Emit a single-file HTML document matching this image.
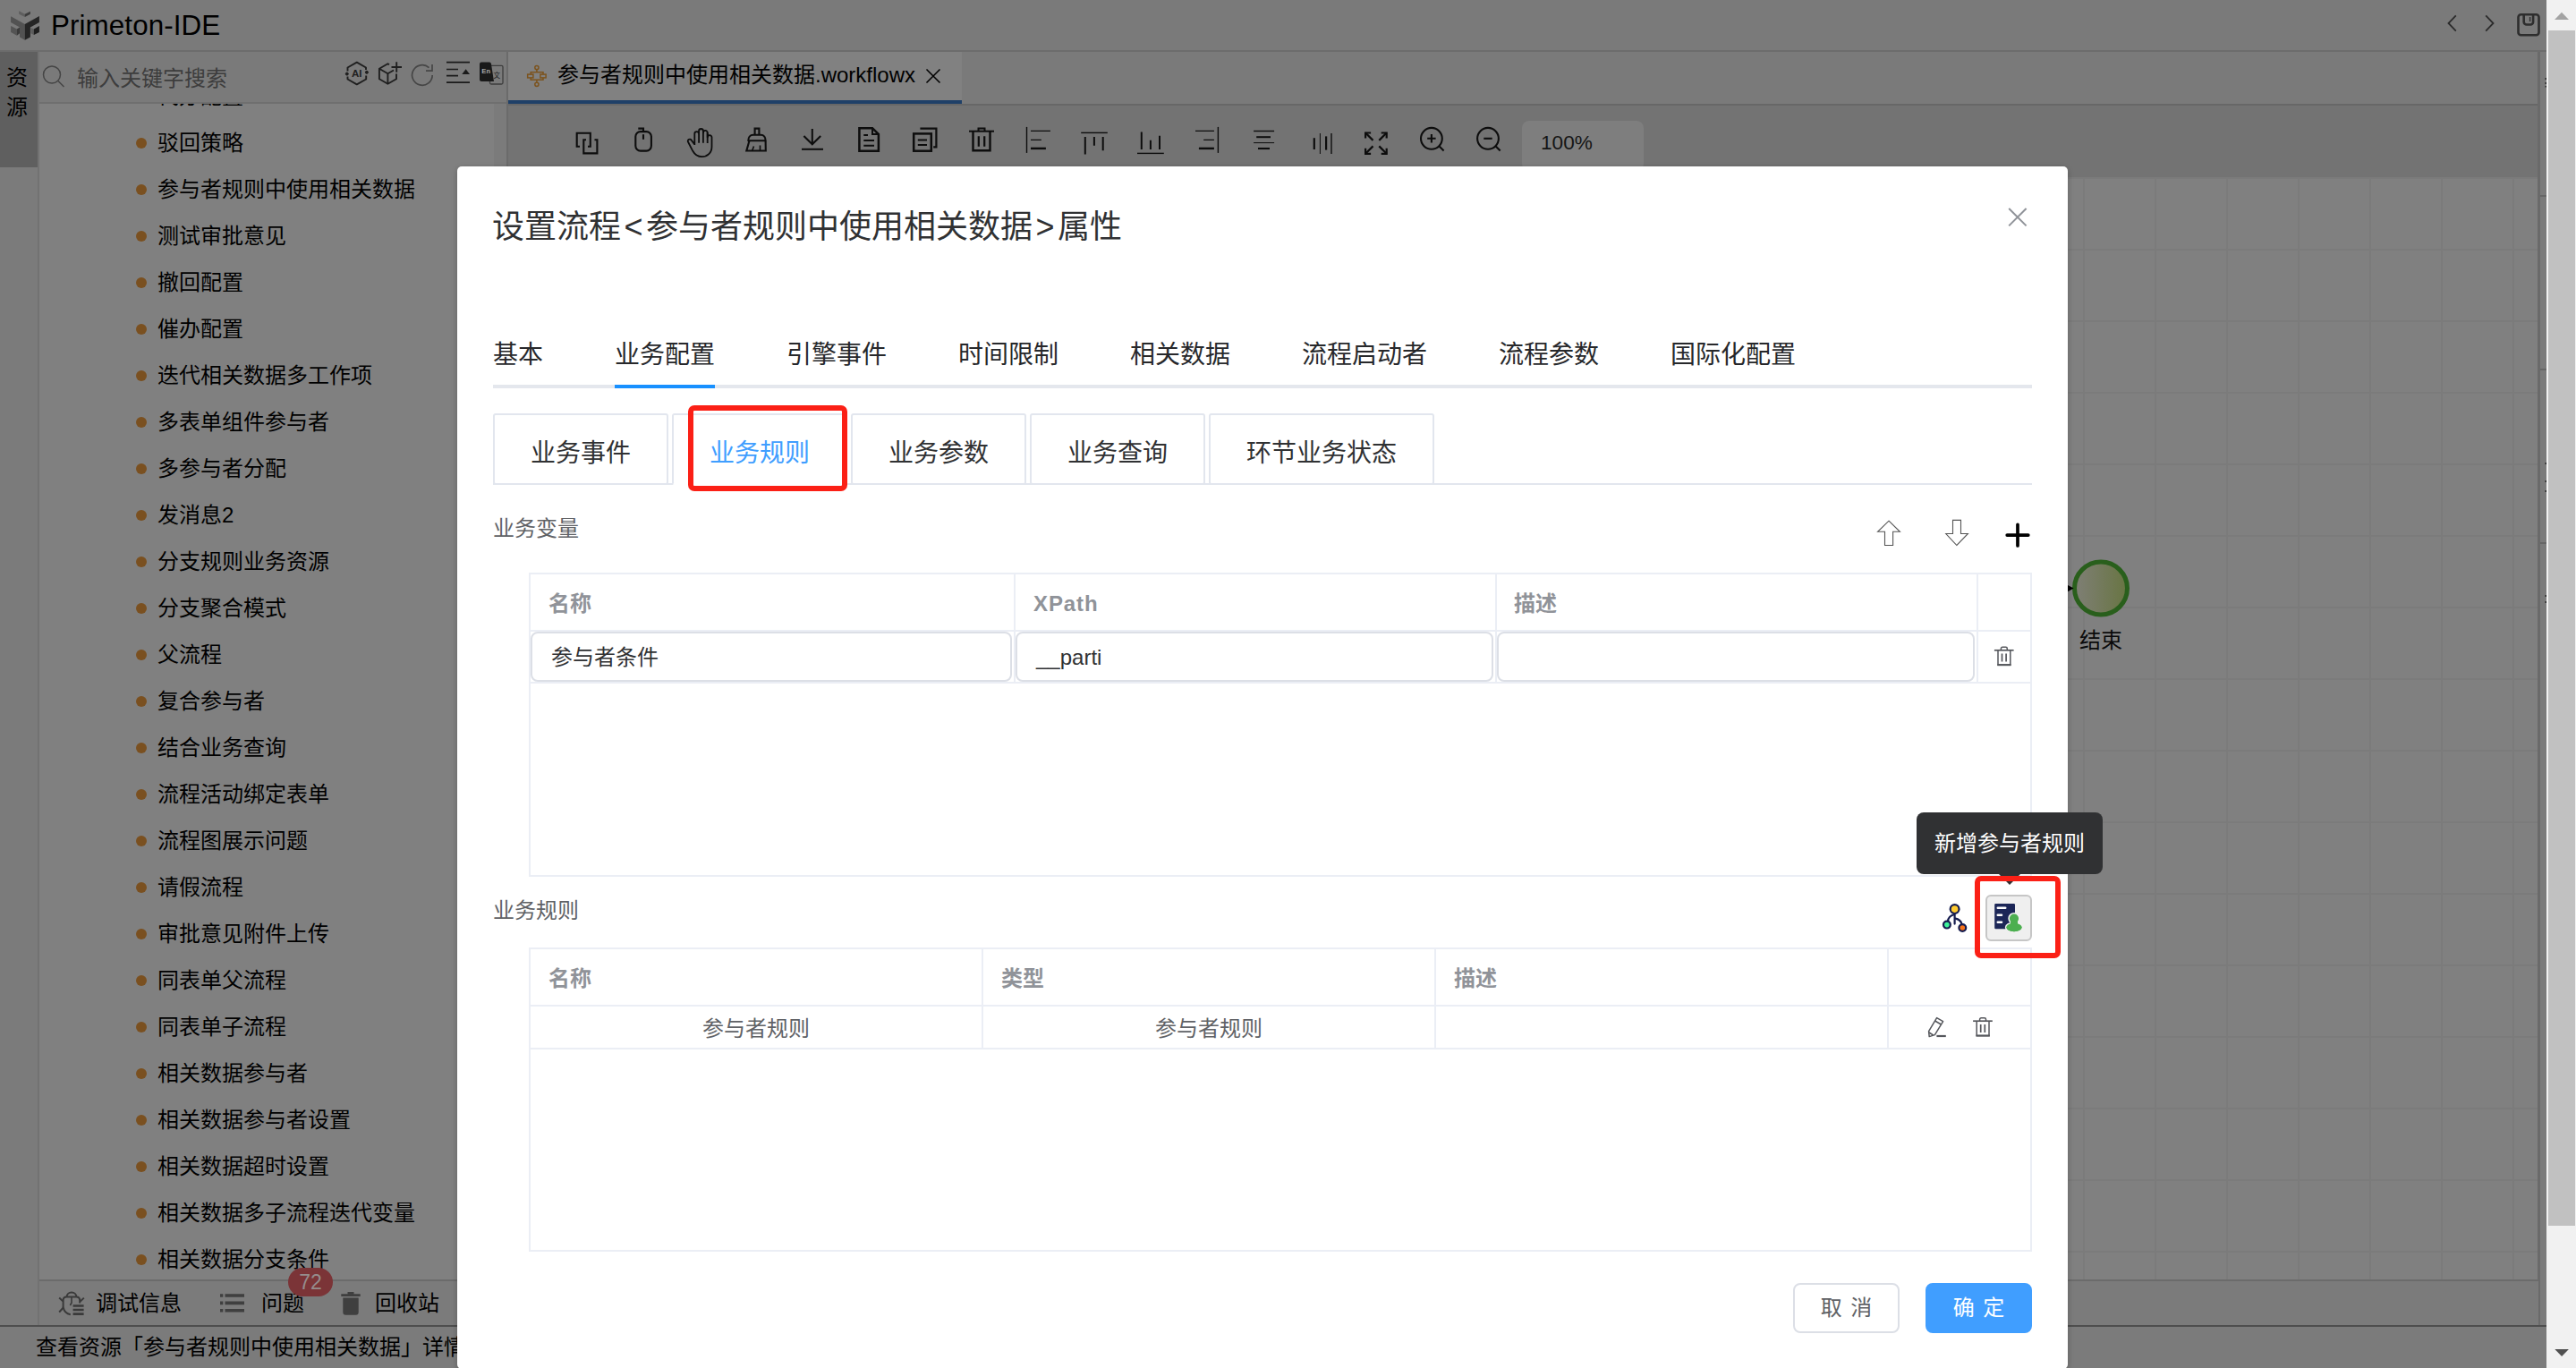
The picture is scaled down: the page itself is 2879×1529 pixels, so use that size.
<!DOCTYPE html>
<html lang="zh-CN">
<head>
<meta charset="utf-8">
<title>Primeton-IDE</title>
<style>
*{box-sizing:border-box;margin:0;padding:0}
html,body{width:2879px;height:1529px;overflow:hidden;background:#808080}
body{position:relative;font-family:"Liberation Sans","Noto Sans CJK SC",sans-serif;color:#000;font-size:24px}
.abs{position:absolute}
svg{position:absolute;overflow:visible}
/* ---------- background IDE (dimmed) ---------- */
#hdr{left:0;top:0;width:2846px;height:56px;background:#7a7a7a}
#hdrline{left:0;top:56px;width:2846px;height:2px;background:#6c6c6c}
#title{left:57px;top:9px;font-size:31.35px;line-height:40px;color:#000;letter-spacing:0.1px}
#strip{left:0;top:58px;width:42px;height:129px;background:#5f5f5f}
#stripbelow{left:0;top:187px;width:42px;height:1295px;background:#7b7b7b}
#stripline{left:42px;top:58px;width:2px;height:1424px;background:#727272}
#striptxt{left:5px;top:70px;width:28px;font-size:24px;line-height:33px;color:#000;text-align:center}
#search{left:44px;top:58px;width:522px;height:56px;background:#7a7a7a}
#searchline{left:44px;top:114px;width:522px;height:2px;background:#6f6f6f}
#ph{left:86px;top:68px;font-size:24px;line-height:40px;color:#3d3d3d}
#tree{left:44px;top:116px;width:508px;height:1314px;background:#808080;overflow:hidden}
#treesb{left:552px;top:116px;width:14px;height:1314px;background:#7b7b7b}
.ti{position:absolute;left:0;height:52px;width:508px;line-height:52px;font-size:24px;color:#000;padding-left:132px;white-space:nowrap}
.ti i{position:absolute;left:108px;top:20px;width:12px;height:12px;border-radius:50%;background:#7a5020}
#vdiv{left:566px;top:58px;width:2px;height:1372px;background:#6b6b6b}
#tabbar{left:568px;top:58px;width:2269px;height:58px;background:#7a7a7a}
#tabact{left:568px;top:58px;width:507px;height:54px;background:#818181}
#tabul{left:568px;top:112px;width:507px;height:4px;background:#1f4068}
#tabline{left:568px;top:116px;width:2269px;height:2px;background:#676767}
#tabtxt{left:623px;top:64px;font-size:24px;line-height:40px;color:#000;white-space:nowrap}
#toolbar{left:568px;top:118px;width:2269px;height:80px;background:#737373}
#zoombox{left:1701px;top:135px;width:136px;height:56px;border-radius:8px;background:#7e7e7e}
#zoomtxt{left:1722px;top:140px;font-size:22.6px;line-height:40px;color:#151515}
#canvas{left:568px;top:198px;width:2269px;height:1232px;background-color:#808080;
 background-image:linear-gradient(to right,#7b7b7b 0,#7b7b7b 2px,transparent 2px),linear-gradient(to bottom,#7b7b7b 0,#7b7b7b 2px,transparent 2px);
 background-size:80px 80px;background-position:-80px 0px}
#rline{left:2836px;top:58px;width:3px;height:1424px;background:#6a6a6a}
#rstrip{left:2839px;top:58px;width:7px;height:1424px;background:#7b7b7b}
#botline1{left:44px;top:1430px;width:2793px;height:2px;background:#6b6b6b}
#botpanel{left:44px;top:1432px;width:2793px;height:49px;background:#7b7b7b}
#botline2{left:0;top:1481px;width:2846px;height:2px;background:#4e4e4e}
#status{left:0;top:1483px;width:2846px;height:46px;background:#7b7b7b}
#statustxt{left:40px;top:1486px;font-size:24px;line-height:40px;color:#000;white-space:nowrap}
.bt{position:absolute;top:1437px;font-size:24px;line-height:40px;color:#000;white-space:nowrap}
#badge{left:322px;top:1417px;width:50px;height:32px;border-radius:16px;background:#7b3437;color:#958c8c;font-size:23px;line-height:32px;text-align:center}
/* page scrollbar */
#sb{left:2846px;top:0;width:33px;height:1529px;background:#f1f1f1}
#sbthumb{left:2848px;top:34px;width:30px;height:1336px;background:#c1c1c1}
/* ---------- dialog ---------- */
#dlg{left:511px;top:186px;width:1800px;height:1344px;background:#fff;border-radius:5px;box-shadow:0 2px 6px rgba(0,0,0,.25)}
#dlgtitle{left:550px;top:228px;font-size:36px;line-height:52px;color:#303133;white-space:nowrap}
#dlgtitle b{font-weight:normal;display:inline-block;width:28px;text-align:center}
.tab{position:absolute;top:375px;font-size:28px;line-height:44px;color:#27282b;white-space:nowrap}
#tabsline{left:551px;top:430px;width:1720px;height:4px;background:#e4e7ed}
#tabsact{left:687px;top:430px;width:112px;height:4px;background:#1890ff}
.card{position:absolute;top:462px;height:80px;border:2px solid #e2e6ee;border-radius:3px;font-size:28px;line-height:86px;color:#303133;text-align:center;white-space:nowrap;background:#fff}
#cardline{left:551px;top:540px;width:1720px;height:2px;background:#e2e6ee}
.lbl{position:absolute;left:551px;margin-top:1px;font-size:24px;line-height:40px;color:#606266;white-space:nowrap}
.tbl{position:absolute;border:2px solid #ebeef5;background:#fff}
.hl{position:absolute;background:#ebeef5}
.th{position:absolute;margin-top:1px;font-size:24px;line-height:40px;font-weight:bold;color:#909399;white-space:nowrap}
.td{position:absolute;margin-top:2px;font-size:24px;line-height:40px;color:#606266;white-space:nowrap;text-align:center}
.inp{position:absolute;top:706px;height:56px;border:2px solid #dcdfe6;border-radius:8px;background:#fff;font-size:24px;line-height:53px;color:#303133;padding-left:21px;white-space:nowrap}
.red{position:absolute;border:6px solid #fb2016;border-radius:7px}
#tip{left:2142px;top:908px;width:208px;height:69px;border-radius:8px;background:#303133;color:#fff;font-size:24px;line-height:69px;text-align:center;white-space:nowrap}
#tiparrow{left:2234px;top:977px;width:0;height:0;border-left:12px solid transparent;border-right:12px solid transparent;border-top:12px solid #303133}
#btn2{left:2219px;top:1000px;width:52px;height:52px;border:2px solid #c6c6c6;border-radius:6px;background:#efefef}
.btn{position:absolute;top:1434px;width:119px;height:56px;border-radius:8px;font-size:24px;line-height:52px;text-align:center;white-space:nowrap;word-spacing:3px}
#cancel{left:2004px;border:2px solid #dcdfe6;background:#fff;color:#606266}
#okbtn{left:2152px;border:2px solid #409eff;background:#409eff;color:#fff}
</style>
</head>
<body>
<!-- ===== dimmed IDE ===== -->
<div id="hdr" class="abs"></div>
<div id="hdrline" class="abs"></div>
<div id="title" class="abs">Primeton-IDE</div>
<div id="strip" class="abs"></div>
<div id="stripbelow" class="abs"></div>
<div id="stripline" class="abs"></div>
<div id="striptxt" class="abs">资<br>源</div>
<div id="search" class="abs"></div>
<div id="searchline" class="abs"></div>
<div id="ph" class="abs">输入关键字搜索</div>
<div id="tree" class="abs">
<div class="ti" style="top:-34px"><i></i>代办配置</div>
<div class="ti" style="top:18px"><i></i>驳回策略</div>
<div class="ti" style="top:70px"><i></i>参与者规则中使用相关数据</div>
<div class="ti" style="top:122px"><i></i>测试审批意见</div>
<div class="ti" style="top:174px"><i></i>撤回配置</div>
<div class="ti" style="top:226px"><i></i>催办配置</div>
<div class="ti" style="top:278px"><i></i>迭代相关数据多工作项</div>
<div class="ti" style="top:330px"><i></i>多表单组件参与者</div>
<div class="ti" style="top:382px"><i></i>多参与者分配</div>
<div class="ti" style="top:434px"><i></i>发消息2</div>
<div class="ti" style="top:486px"><i></i>分支规则业务资源</div>
<div class="ti" style="top:538px"><i></i>分支聚合模式</div>
<div class="ti" style="top:590px"><i></i>父流程</div>
<div class="ti" style="top:642px"><i></i>复合参与者</div>
<div class="ti" style="top:694px"><i></i>结合业务查询</div>
<div class="ti" style="top:746px"><i></i>流程活动绑定表单</div>
<div class="ti" style="top:798px"><i></i>流程图展示问题</div>
<div class="ti" style="top:850px"><i></i>请假流程</div>
<div class="ti" style="top:902px"><i></i>审批意见附件上传</div>
<div class="ti" style="top:954px"><i></i>同表单父流程</div>
<div class="ti" style="top:1006px"><i></i>同表单子流程</div>
<div class="ti" style="top:1058px"><i></i>相关数据参与者</div>
<div class="ti" style="top:1110px"><i></i>相关数据参与者设置</div>
<div class="ti" style="top:1162px"><i></i>相关数据超时设置</div>
<div class="ti" style="top:1214px"><i></i>相关数据多子流程迭代变量</div>
<div class="ti" style="top:1266px"><i></i>相关数据分支条件</div>
</div>
<div id="treesb" class="abs"></div>
<div id="vdiv" class="abs"></div>
<div id="tabbar" class="abs"></div>
<div id="tabact" class="abs"></div>
<div id="tabul" class="abs"></div>
<div id="tabline" class="abs"></div>
<div id="tabtxt" class="abs">参与者规则中使用相关数据.workflowx</div>
<div id="toolbar" class="abs"></div>
<div id="zoombox" class="abs"></div>
<div id="zoomtxt" class="abs">100%</div>
<div id="canvas" class="abs"></div>
<div id="rline" class="abs"></div>
<div id="rstrip" class="abs"></div>
<div id="botline1" class="abs"></div>
<div id="botpanel" class="abs"></div>
<div id="botline2" class="abs"></div>
<div id="status" class="abs"></div>
<div id="statustxt" class="abs">查看资源「参与者规则中使用相关数据」详情</div>
<div class="bt" style="left:107px">调试信息</div>
<div class="bt" style="left:292px">问题</div>
<div class="bt" style="left:419px">回收站</div>
<div id="badge" class="abs">72</div>
<!--BGICONS_START-->
<svg id="bgicons" style="left:0;top:0" width="2879" height="1529" viewBox="0 0 2879 1529" fill="none" stroke-linecap="butt" stroke-linejoin="miter">
<!-- logo -->
<g stroke="none">
<polygon points="21.2,12.3 27.8,15.7 27.8,19.1 21.2,15.7" fill="#5e5e5e"/>
<polygon points="27.8,15.7 33.9,12.7 33.9,15.7 27.8,19.1" fill="#3c3c3c"/>
<polygon points="12.1,18.2 27.8,26.9 27.8,44.7 22,41.5 22,30.5 12.1,25" fill="#525252"/>
<polygon points="27.8,26.9 43.9,18 43.9,25 33.9,30.5 33.9,41.5 27.8,44.7" fill="#252525"/>
<polygon points="12.1,29 18.9,32.6 18.9,39.8 12.1,36" fill="#545454"/>
<polygon points="18.9,32.6 22,30.5 22,37.3 18.9,39.8" fill="#3a3a3a"/>
<polygon points="34.5,30.9 37.9,32.6 37.9,39 34.5,37.3" fill="#5c5c5c"/>
<polygon points="37.9,32.6 43.9,29 43.9,36 37.9,39" fill="#1e1e1e"/>
</g>
<!-- header right icons -->
<g stroke="#2c2c2c" stroke-width="1.8">
<polyline points="2744.8,17.4 2736.5,26 2744.8,34.6"/>
<polyline points="2778.2,17.4 2786.5,26 2778.2,34.6"/>
</g>
<g stroke="#2e2e2e" stroke-width="2.6">
<rect x="2814.5" y="16.3" width="23" height="23" rx="3"/>
<path d="M2820.7,16.3 V24.5 a3,3 0 0 0 3,3 h4.4 a3,3 0 0 0 3,-3 V16.3"/>
<path d="M2827.6,19 V24" stroke-width="1.4"/>
</g>
<!-- search icon -->
<g stroke="#454545" stroke-width="1.5">
<circle cx="58" cy="83.5" r="9.5"/>
<path d="M65,90.5 L71.5,97"/>
</g>
<!-- AI hexagon -->
<g stroke="#1f1f1f" stroke-width="1.9" stroke-linejoin="round">
<path d="M388.5,79.5 V75.5 L398.8,69.6 L409,75.5 V78"/>
<path d="M409.2,84.5 V88.5 L398.8,94.4 L388.5,88.5 V85.5"/>
<circle cx="387.8" cy="82.6" r="1.5" fill="#1f1f1f" stroke-width="1"/>
<circle cx="409.9" cy="80.8" r="1.5" fill="#1f1f1f" stroke-width="1"/>
</g>
<text x="398.7" y="86.3" font-family="Liberation Sans, sans-serif" font-weight="bold" font-size="11.5" fill="#1f1f1f" stroke="none" text-anchor="middle">AI</text>
<!-- cube plus -->
<g stroke="#1f1f1f" stroke-width="1.9" stroke-linejoin="round">
<path d="M435,72.2 L433.4,71.3 L423.9,76.8 V88.3 L433.4,93.8 L443,88.3 V82.5"/>
<path d="M423.9,76.8 L433.4,82.3 L440,78.5"/>
<path d="M433.4,82.3 V93.8"/>
<path d="M437.5,75 H449 M443.2,69.3 V80.7"/>
</g>
<!-- refresh -->
<g stroke="#464646" stroke-width="1.7">
<path d="M483.2,84 A11.3,11.3 0 1 1 479.5,75.6"/>
<polyline points="483,72 483,79.2 476,79.2"/>
</g>
<!-- collapse -->
<g stroke="#1a1a1a" stroke-width="1.7">
<path d="M499,69.6 H525 M499,77.5 H512 M499,84.6 H512 M499,92.2 H525"/>
<polygon points="516.3,83 520.6,77.3 525,83" fill="#1a1a1a" stroke="none"/>
</g>
<!-- translate -->
<g>
<rect x="547.5" y="73.3" width="14.5" height="20.7" rx="1.5" stroke="#3d3d3d" stroke-width="1.3"/>
<path d="M538,69.4 h9 a2,2 0 0 1 1.9,1.5 L552,91 h-14 a2,2 0 0 1 -2,-2 v-17.6 a2,2 0 0 1 2,-2z" fill="#191919" stroke="none"/>
<text x="543.2" y="82.4" font-family="Liberation Sans, sans-serif" font-weight="bold" font-size="7.6" fill="#a8a8a8" stroke="none" text-anchor="middle">En</text>
<text x="555.3" y="86.6" font-family="'Noto Sans CJK SC', sans-serif" font-size="7.6" fill="#1c1c1c" stroke="none" text-anchor="middle">文</text>
</g>
<!-- tab icon workflow -->
<g stroke="#7c531d" stroke-width="1.5">
<circle cx="599.9" cy="75.6" r="2.1"/>
<circle cx="599.9" cy="94.3" r="2.1"/>
<path d="M599.9,77.8 V80.7 M599.9,89.2 V92.1"/>
<rect x="593.2" y="80.7" width="13.8" height="8.5"/>
<rect x="589.7" y="83.1" width="6.2" height="3.8" fill="#818181"/>
<rect x="603.9" y="83.1" width="6.2" height="3.8" fill="#818181"/>
</g>
<!-- tab close -->
<path d="M1035.5,77.5 L1050.5,92.5 M1050.5,77.5 L1035.5,92.5" stroke="#000" stroke-width="1.5"/>
<!-- toolbar icons -->
<g stroke="#0d0d0d" stroke-width="2.1">
<!-- 1 overlapping squares -->
<path d="M648,163.8 H644.7 V148.7 H659.8 V163.8 H657"/>
<path d="M655,156.3 H652.3 V171.4 H667.4 V156.3 H664.5"/>
<!-- 2 mouse -->
<rect x="710.3" y="147.1" width="17.6" height="21.5" rx="5.5"/>
<path d="M719,147 V143.6 H713.3"/>
<path d="M719,150.2 V155.8"/>
<!-- 3 hand -->
<path d="M776.3,162 V149.6 a2.4,2.4 0 0 1 4.8,0 V146.4 a2.4,2.4 0 0 1 4.8,0 V148.3 a2.4,2.4 0 0 1 4.8,0 V153.5 a2.4,2.4 0 0 1 4.8,0 V164 C795.5,171 790.5,175.2 784.5,175.2 C779.5,175.2 776.5,172.8 774.3,168.8 L769.2,159 a2.1,2.1 0 0 1 3.3,-2.6 L776.3,161.5" stroke-width="1.8" stroke-linejoin="round"/>
<path d="M781.1,149.6 V159.8 M785.9,146.4 V159.8 M790.7,148.3 V160" stroke-width="1.8"/>
<!-- 4 broom -->
<path d="M843.6,150.7 V143.6 H848.4 V150.7"/>
<path d="M836.3,157.3 c0,-3.6 2,-6.6 5.5,-6.6 h8.5 c3.5,0 5.3,3 5.3,6.6 Z" stroke-linejoin="round"/>
<path d="M837.5,157.3 L834.3,168.5 H855.8 L855.6,157.3"/>
<path d="M842.5,163.5 L840.8,168 M849.5,162.5 V168" stroke-width="1.6"/>
<!-- 5 download -->
<path d="M907.8,144 V161"/>
<polyline points="898.4,151.9 907.8,161.3 917.2,151.9"/>
<path d="M896,166.8 H920" stroke-width="2"/>
<!-- 6 document -->
<path d="M960.4,143.2 H975 L981.9,150 V168.7 H960.4 Z" stroke-width="2.5"/>
<path d="M975,143.2 V150 H981.9" stroke-width="2"/>
<path d="M965.3,151 H970 M965.3,157 H977 M965.3,162.8 H977" stroke-width="2"/>
<!-- 7 copy docs -->
<rect x="1021.2" y="149.4" width="19.6" height="19.3" stroke-width="2.5"/>
<path d="M1028.4,143.7 H1046.4 V164.3 H1043.2" stroke-width="2.2"/>
<path d="M1025.8,156.4 H1036 M1025.8,162.1 H1036" stroke-width="2"/>
<!-- 8 trash -->
<path d="M1083,146.7 H1111" stroke-width="2"/>
<path d="M1093.5,146.7 V143.6 H1100.5 V146.7" stroke-width="2"/>
<path d="M1087.5,146.7 V168.3 H1106.5 V146.7" stroke-width="2.4"/>
<path d="M1093.8,152.2 V163.8 M1100.2,152.2 V163.8" stroke-width="2.2"/>
<!-- 9 align-left -->
<path d="M1147.5,141.9 V170.9" stroke-width="1.4"/>
<path d="M1152,146.4 H1173.9 M1152,156.4 H1163.8" stroke-width="1.3"/>
<path d="M1152,165.9 H1168.9" stroke-width="2.4"/>
<!-- 10 align-top -->
<path d="M1208.2,148.4 H1237.8" stroke-width="1.4"/>
<path d="M1212.8,153 V172.4 M1222.9,153 V162.8 M1232.7,153 V168.2" stroke-width="2"/>
<!-- 11 align-bottom -->
<path d="M1271,171.4 H1300.8" stroke-width="1.4"/>
<path d="M1275.8,147.4 V167.1 M1285.9,156.7 V167.1 M1296,151.7 V167.1" stroke-width="2"/>
<!-- 12 align-right -->
<path d="M1361.4,141.9 V170.9" stroke-width="1.4"/>
<path d="M1336,146.4 H1356.9 M1345.2,156.4 H1356.9" stroke-width="1.3"/>
<path d="M1339.9,165.9 H1356.9" stroke-width="2.4"/>
<!-- 13 align-center -->
<path d="M1401.1,146.5 H1424.1" stroke-width="1.4"/>
<path d="M1404.2,153.2 H1420" stroke-width="2"/>
<path d="M1401.1,159.6 H1424.1" stroke-width="1"/>
<path d="M1406,166 H1419" stroke-width="2.1"/>
<!-- 14 distribute -->
<path d="M1468.8,154.2 V167" stroke-width="2.2"/>
<path d="M1475.4,149 V172" stroke-width="1"/>
<path d="M1482.1,152.4 V167.6" stroke-width="2.2"/>
<path d="M1488,149 V172" stroke-width="1.4"/>
<!-- 15 fullscreen -->
<g stroke-width="2.2">
<polyline points="1526.1,154.5 1526.1,148.5 1532.1,148.5"/><path d="M1526.1,148.5 L1534.5,156.9"/>
<polyline points="1543.7,148.5 1549.7,148.5 1549.7,154.5"/><path d="M1549.7,148.5 L1541.3,156.9"/>
<polyline points="1526.1,165.8 1526.1,171.8 1532.1,171.8"/><path d="M1526.1,171.8 L1534.5,163.4"/>
<polyline points="1543.7,171.8 1549.7,171.8 1549.7,165.8"/><path d="M1549.7,171.8 L1541.3,163.4"/>
</g>
<!-- 16 zoom in -->
<circle cx="1599.9" cy="154.8" r="11.9"/>
<path d="M1608.6,163.6 L1613.6,168.6"/>
<path d="M1595.2,154.8 H1604.6 M1599.9,150.1 V159.5"/>
<!-- 17 zoom out -->
<circle cx="1663" cy="154.8" r="11.9"/>
<path d="M1671.7,163.6 L1676.7,168.6"/>
<path d="M1658.3,154.8 H1667.7"/>
</g>
<!-- bottom panel icons -->
<g stroke="#3a3a3a" stroke-width="2" stroke-linejoin="round">
<path d="M74.6,1449.5 C74.6,1446.5 77,1444.6 80,1444.6 C83,1444.6 85.4,1446.5 85.4,1449.5"/>
<path d="M70.6,1461 V1453.5 C70.6,1451 72,1449.6 74.5,1449.6 H85.2 C87.8,1449.6 89.2,1451 89.2,1453.5 V1456.5"/>
<path d="M66.2,1450.6 L70.2,1454.2 M93.8,1450.6 L89.8,1454.4 M66.2,1466.5 L70.8,1461.5"/>
<path d="M70.6,1461 C71.5,1465.5 74.5,1468.4 78.8,1469.2"/>
<path d="M80,1449.6 V1456 L78.4,1459" stroke-width="1.6"/>
<path d="M81.6,1459.5 H93.6 M81.6,1464 H93.6 M81.6,1468.6 H93.6" stroke-width="2.6"/>
</g>
<g stroke="#3f3f3f" stroke-width="3.6">
<path d="M251.5,1448 H273 M251.5,1456.4 H273 M251.5,1464.7 H273"/>
<path d="M246,1448 H249.3 M246,1456.4 H249.3 M246,1464.7 H249.3"/>
</g>
<g fill="#3f3f3f" stroke="none">
<path d="M381.3,1446.3 h21.4 v2.6 h-21.4z M388.5,1444 h7 v2.4 h-7z M383.3,1450.6 h17.4 v16.2 a3,3 0 0 1 -3,3 h-11.4 a3,3 0 0 1 -3,-3z"/>
</g>
<!-- end node -->
<defs><linearGradient id="eg" x1="0" x2="1" y1="0" y2="0"><stop offset="0" stop-color="#7f7f76"/><stop offset="1" stop-color="#687542"/></linearGradient></defs>
<circle cx="2348" cy="657.5" r="29.5" fill="url(#eg)" stroke="#295f1c" stroke-width="5"/>
<polygon points="2311,654 2317.6,657.6 2311,661.2" fill="#000" stroke="none"/>
<text x="2348" y="724" font-family="'Noto Sans CJK SC', sans-serif" font-size="24" fill="#0a0a0a" stroke="none" text-anchor="middle">结束</text>
<!-- right strip marks -->
<g stroke="#666" stroke-width="2"><path d="M2839,219 H2846 M2839,413 H2846 M2839,607 H2846"/></g>
<g fill="#222" stroke="none"><rect x="2844.6" y="87" width="1.4" height="2"/><rect x="2844.6" y="92" width="1.4" height="2"/><rect x="2844.6" y="96" width="1.4" height="1.5"/><rect x="2844.6" y="517" width="1.4" height="2"/><rect x="2844.6" y="537" width="1.4" height="2"/><rect x="2844.6" y="548" width="1.4" height="2"/><rect x="2844.6" y="665" width="1.4" height="2"/><rect x="2844.6" y="672" width="1.4" height="2"/></g>
</svg>
<!--BGICONS_END-->

<div id="sb" class="abs"></div>
<div id="sbthumb" class="abs"></div>
<svg style="left:2846px;top:0" width="33" height="1529" viewBox="2846 0 33 1529"><polygon points="2855,22 2871,22 2863,13.8" fill="#a3a3a3"/><polygon points="2855.3,1508 2870.9,1508 2863.1,1516" fill="#505050"/></svg>
<!-- ===== dialog ===== -->
<div id="dlg" class="abs"></div>
<div id="dlgtitle" class="abs">设置流程<b>&lt;</b>参与者规则中使用相关数据<b>&gt;</b>属性</div>
<div class="tab" style="left:551px">基本</div>
<div class="tab" style="left:687px">业务配置</div>
<div class="tab" style="left:879px">引擎事件</div>
<div class="tab" style="left:1071px">时间限制</div>
<div class="tab" style="left:1263px">相关数据</div>
<div class="tab" style="left:1455px">流程启动者</div>
<div class="tab" style="left:1675px">流程参数</div>
<div class="tab" style="left:1867px">国际化配置</div>
<div id="tabsline" class="abs"></div>
<div id="tabsact" class="abs"></div>
<div id="cardline" class="abs"></div>
<div class="card" style="left:551px;width:196px">业务事件</div>
<div class="card" style="left:751px;width:196px;color:#409eff;border-bottom-color:#fff">业务规则</div>
<div class="card" style="left:951px;width:196px">业务参数</div>
<div class="card" style="left:1151px;width:196px">业务查询</div>
<div class="card" style="left:1351px;width:252px">环节业务状态</div>
<div class="red" style="left:769px;top:453px;width:178px;height:96px"></div>
<div class="lbl" style="top:570px">业务变量</div>
<!-- table 1 -->
<div class="tbl" style="left:591px;top:640px;width:1680px;height:340px"></div>
<div class="hl" style="left:593px;top:704px;width:1676px;height:2px"></div>
<div class="hl" style="left:593px;top:762px;width:1676px;height:2px"></div>
<div class="hl" style="left:1133px;top:642px;width:2px;height:122px"></div>
<div class="hl" style="left:1671px;top:642px;width:2px;height:122px"></div>
<div class="hl" style="left:2209px;top:642px;width:2px;height:122px"></div>
<div class="th" style="left:613px;top:654px">名称</div>
<div class="th" style="left:1155px;top:654px;letter-spacing:0.9px">XPath</div>
<div class="th" style="left:1692px;top:654px">描述</div>
<div class="inp" style="left:593px;width:538px">参与者条件</div>
<div class="inp" style="left:1135px;width:534px">__parti</div>
<div class="inp" style="left:1673px;width:534px"></div>
<div class="lbl" style="top:997px">业务规则</div>
<!-- table 2 -->
<div class="tbl" style="left:591px;top:1059px;width:1680px;height:340px"></div>
<div class="hl" style="left:593px;top:1123px;width:1676px;height:2px"></div>
<div class="hl" style="left:593px;top:1171px;width:1676px;height:2px"></div>
<div class="hl" style="left:1097px;top:1061px;width:2px;height:112px"></div>
<div class="hl" style="left:1603px;top:1061px;width:2px;height:112px"></div>
<div class="hl" style="left:2109px;top:1061px;width:2px;height:112px"></div>
<div class="th" style="left:613px;top:1073px">名称</div>
<div class="th" style="left:1119px;top:1073px">类型</div>
<div class="th" style="left:1625px;top:1073px">描述</div>
<div class="td" style="left:593px;width:504px;top:1128px">参与者规则</div>
<div class="td" style="left:1099px;width:504px;top:1128px">参与者规则</div>
<div id="tip" class="abs">新增参与者规则</div>
<div id="tiparrow" class="abs"></div>
<div id="btn2" class="abs"></div>
<!--DLGICONS_START-->
<svg id="dlgicons" style="left:0;top:0" width="2879" height="1529" viewBox="0 0 2879 1529" fill="none">
<!-- dialog close -->
<path d="M2245.2,233 L2264.6,252.4 M2264.6,233 L2245.2,252.4" stroke="#909399" stroke-width="2"/>
<!-- up / down arrows -->
<g stroke="#555" stroke-width="1.1" stroke-linejoin="miter">
<path d="M2111,582.2 L2123.4,594.3 H2115.6 V609.5 H2106.5 V594.3 H2098.6 Z"/>
<path d="M2182.5,581.4 H2191.5 V596.5 H2199.4 L2186.9,609.5 L2174.8,596.5 H2182.5 Z"/>
</g>
<!-- plus -->
<path d="M2243.2,598.1 H2266.8 M2255,586.3 V609.9" stroke="#000" stroke-width="3.7" stroke-linecap="round"/>
<!-- trash row 1 -->
<g id="trash1" stroke="#55575c" stroke-width="1.5" transform="translate(23.8,-414.4)">
<path d="M2205.1,1141.2 H2226.8" stroke-width="1.7"/>
<path d="M2212.6,1141 V1139.3 a1.6,1.6 0 0 1 1.6,-1.6 h3.7 a1.6,1.6 0 0 1 1.6,1.6 V1141"/>
<path d="M2209.2,1141.2 V1157.4 H2223 V1141.2"/>
<path d="M2208.5,1157.6 H2223.8" stroke-width="2"/>
<path d="M2213.7,1145 V1154 M2218.3,1145 V1154" stroke-width="1.7"/>
</g>
<!-- edit + trash row 2 -->
<g stroke="#55575c" stroke-width="1.5">
<path d="M2164.6,1137.6 L2171.6,1141.6 L2162.4,1156.6 L2156.2,1158.6 L2155.6,1152.6 Z" stroke-linejoin="round"/>
<path d="M2162.6,1141 L2169.4,1145"/>
<path d="M2156,1154 L2160.6,1157"/>
<path d="M2164.4,1158 H2174.8" stroke-width="2.2"/>
<path d="M2205.1,1141.2 H2226.8" stroke-width="1.7"/>
<path d="M2212.6,1141 V1139.3 a1.6,1.6 0 0 1 1.6,-1.6 h3.7 a1.6,1.6 0 0 1 1.6,1.6 V1141"/>
<path d="M2209.2,1141.2 V1157.4 H2223 V1141.2"/>
<path d="M2208.5,1157.6 H2223.8" stroke-width="2"/>
<path d="M2213.7,1145 V1154 M2218.3,1145 V1154" stroke-width="1.7"/>
</g>
<!-- tree icon -->
<g stroke="#151c4f" stroke-width="2.2" stroke-linecap="round">
<path d="M2184.6,1021.5 V1032.6"/>
<path d="M2183.5,1022.3 C2179.5,1023.5 2177.5,1026 2177,1029.5"/>
<path d="M2185.5,1026.6 C2189.5,1027.3 2191.5,1029.5 2192.5,1032.5"/>
<circle cx="2184.6" cy="1016.1" r="4.9" fill="#ffcb2f"/>
<circle cx="2175.9" cy="1033.6" r="3.9" fill="#3df29a"/>
<circle cx="2193.3" cy="1037" r="3.9" fill="#f8731a"/>
</g>
<!-- person rule icon -->
<rect x="2229.2" y="1009.9" width="22.8" height="28.4" rx="1.2" fill="#1c2657"/>
<g stroke="#fff" stroke-width="2.6" stroke-linecap="round"><path d="M2232.8,1014.7 H2241.2 M2232.8,1022.7 H2237 M2232.8,1030.8 H2237"/></g>
<g fill="#4caf50" stroke="#f0f0f0" stroke-width="1.6">
<ellipse cx="2251" cy="1036.6" rx="9.4" ry="5.4"/>
<circle cx="2251" cy="1026.6" r="5.9"/>
<ellipse cx="2251" cy="1036.6" rx="8.6" ry="4.6" stroke="none"/>
<path d="M2247,1030 h8 v4 h-8z" stroke="none"/>
</g>
</svg>
<!--DLGICONS_END-->
<div class="red" style="left:2207px;top:979px;width:96px;height:92px"></div>
<div id="cancel" class="btn">取 消</div>
<div id="okbtn" class="btn">确 定</div>
</body>
</html>
